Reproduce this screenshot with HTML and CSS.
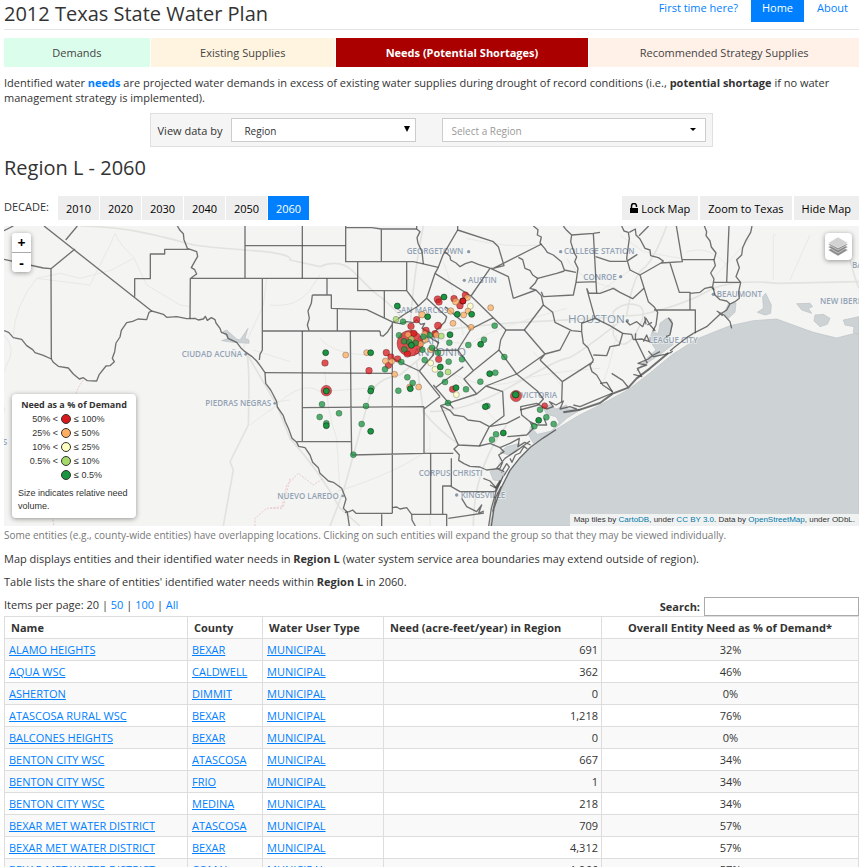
FILE: index.html
```html
<!DOCTYPE html>
<html lang="en">
<head>
<meta charset="utf-8">
<title>2012 Texas State Water Plan</title>
<link rel="stylesheet" href="styles.css">
</head>
<body>
<header class="site-header">
  <h1>2012 Texas State Water Plan</h1>
  <nav class="site-nav">
    <a href="#first">First time here?</a>
    <a href="#home" class="active">Home</a>
    <a href="#about">About</a>
  </nav>
</header>

<nav class="tabs">
  <a href="#demands" class="tab demands">Demands</a>
  <a href="#supplies" class="tab supplies">Existing Supplies</a>
  <a href="#needs" class="tab needs">Needs (Potential Shortages)</a>
  <a href="#strategies" class="tab strategies">Recommended Strategy Supplies</a>
</nav>

<p class="intro">Identified water <a href="#needs"><b>needs</b></a> are projected water demands in excess of existing water supplies during drought of record conditions (i.e., <b>potential shortage</b> if no water management strategy is implemented).</p>

<form class="picker">
  <label for="view-by">View data by</label>
  <span class="field view-by">
    <select id="view-by"><option>Region</option><option>County</option></select>
    <svg class="arrow" width="8" height="8" viewBox="0 0 8 8"><path d="M1 1h6L4 7z"/></svg>
  </span>
  <span class="field region">
    <input type="text" aria-label="Region" placeholder="Select a Region">
    <svg class="arrow" width="8" height="8" viewBox="0 0 8 8"><path d="M1 3h6L4 6z"/></svg>
  </span>
</form>

<h2>Region L - 2060</h2>

<div class="map-bar">
  <span class="bar-label">DECADE:</span>
  <div class="buttons decades">
    <button type="button">2010</button>
    <button type="button">2020</button>
    <button type="button">2030</button>
    <button type="button">2040</button>
    <button type="button">2050</button>
    <button type="button" class="active">2060</button>
  </div>
  <div class="buttons tools">
    <button type="button"><svg width="8" height="11" viewBox="0 0 8 11"><path d="M1.500 6V3a2.500 2.500 0 0 1 5 0v1" fill="none" stroke="#000" stroke-width="1.500"/><path d="M0 5h8v5H0z"/></svg> Lock Map</button>
    <button type="button">Zoom to Texas</button>
    <button type="button">Hide Map</button>
  </div>
</div>

<div class="map">
<svg class="map-canvas" viewBox="12 3 2565 900" preserveAspectRatio="xMidYMid slice">
  <rect class="land" x="-2000" y="-200" width="7000" height="1400"/>
  <g class="road">
    <path d="M240 3Q350 5 440 25T560 55T735 75T870 105L960 125Q1020 100 1060 140L1120 200Q1180 240 1230 310"/>
    <path d="M740 385Q750 420 745 600L690 710L700 735L670 903M740 385L830 540L870 640Q960 740 1020 850L1080 903"/>
    <path d="M990 903L1030 800L1110 510Q1130 460 1200 450L1260 400M1250 410L1270 560Q1320 620 1380 660"/>
    <path d="M1270 3Q1240 150 1230 310L1260 400M1240 330Q1400 300 1600 290T1850 275L1920 270Q2050 240 2120 200T2330 175L2577 170"/>
    <path d="M1290 560Q1400 560 1540 480T1700 400T1860 290M1840 260Q1870 230 1910 240T1910 320T1840 330ZM2000 3Q1960 110 1930 130T1880 270"/>
    <path d="M1420 903Q1420 730 1520 600M2530 30Q2560 150 2577 190"/>
  </g>
  <g class="road minor">
    <path d="M12 330Q50 370 20 420T15 560M40 330Q45 240 110 160L270 180L330 60L345 25Q360 60 400 95L440 180L540 240L570 245"/>
    <path d="M110 160L180 145L240 160L335 135L400 100M800 160L790 240L730 370M760 375L870 410M830 530L870 525M750 600L830 540"/>
    <path d="M810 560Q900 460 960 500L1100 490M975 440Q980 560 1010 640L1020 800M960 340Q1000 390 1120 390M1010 800Q1200 740 1290 670M810 240Q900 250 940 180L960 150"/>
    <path d="M1310 340Q1400 370 1440 340T1700 250M1310 400L1500 600M1330 430Q1440 500 1540 470T1800 430M1400 40Q1520 70 1620 60M1690 490Q1650 430 1600 380M2330 30H2320V165M2370 165L2430 30M1860 30L1930 80L2040 100M2250 40L2130 170M1800 200Q1850 160 1900 130"/>
    <path d="M1290 620V903M1470 850L1500 700M1850 330Q1830 420 1810 470M2060 80Q2130 60 2180 120M1700 100Q1740 170 1850 190M1330 110Q1370 220 1390 330"/>
  </g>
  <path class="border" d="M250 465Q230 490 225 520M155 865L162 903M765 903V880L800 850L850 845L870 760M810 850L845 850L860 780L895 745L940 780L970 760"/>
  <path class="water" d="M1470 903L1480 850L1502 790L1530 735L1560 698L1590 668L1628 640L1670 612L1735 572L1800 540L1885 494L1950 444L2015 390L2090 342L2190 302L2260 287L2330 282L2390 304L2440 322L2510 339L2545 330L2577 322V903Z"/>
  <path class="water" d="M1975 325L1980 295L2000 280L2015 283L2018 300L2005 335L2020 358L1985 385L1940 415L1910 438L1945 395L1968 375L1950 348L1955 322ZM2172 265L2185 237L2208 234L2205 262L2185 280ZM2272 262L2290 250L2288 215L2297 205L2314 240L2312 265L2295 270ZM2390 236L2430 235L2438 245L2425 250L2435 265L2405 255ZM2445 270L2470 268L2490 280L2482 298L2460 305L2442 288ZM2530 285L2577 275V330L2560 322L2562 305L2535 300Z"/>
  <path class="water" d="M1585 628L1592 605L1612 628L1655 618L1678 592L1668 575L1640 568L1628 545L1650 540L1668 552L1700 540L1702 552L1745 552L1700 580L1672 605L1630 635L1600 655ZM1500 682L1520 665L1560 655L1548 680L1526 690ZM1470 740L1490 728L1515 740L1502 768L1480 765ZM665 347L685 340L668 320L680 315L710 342L720 345L744 310L735 340L747 345V355L700 352Z"/>

  <g class="labels">
    <text x="545" y="397">CIUDAD ACUÑA</text><text x="616" y="543">PIEDRAS NEGRAS</text>
    <text x="832" y="822">NUEVO LAREDO</text><text x="-8" y="661">AS</text>
    <text x="1220" y="87">GEORGETOWN</text><text x="1404" y="174">AUSTIN</text>
    <text x="1190" y="265">SAN MARCOS</text><text x="1692" y="88">COLLEGE STATION</text>
    <text x="1750" y="164">CONROE</text><text x="1563" y="519">VICTORIA</text>
    <text x="1256" y="753">CORPUS CHRISTI</text><text x="1382" y="818">KINGSVILLE</text>
    <text x="2150" y="216">BEAUMONT</text><text x="1946" y="353">LEAGUE CITY</text>
    <text x="2460" y="236">NEW IBERIA</text><text x="2556" y="130">BATON</text>
    <text class="big" x="1704" y="295">HOUSTON</text>
    <text class="big" x="1252" y="358">SAN</text><text class="big" x="1240" y="392">ANTONIO</text>
  </g>
  <g class="towns">
    <circle cx="737" cy="388" r="4"/><circle cx="824" cy="535" r="4"/><circle cx="1028" cy="813" r="4"/><circle cx="1406" cy="80" r="5"/>
    <circle cx="1393" cy="166" r="5"/><circle cx="1682" cy="80" r="5"/><circle cx="1862" cy="155" r="5"/><circle cx="1370" cy="810" r="5"/><circle cx="1882" cy="287" r="5"/><circle cx="2140" cy="208" r="5"/>
  </g>

  <g class="county">
    <path d="M12 17L40 3M132 3L455 258M197 45L232 3M225 72L153 131L130 129L12 103M153 131L154 402"/>
    <path d="M12 317L26 322L40 338L65 343L80 362L98 374L105 383L130 391L154 402L160 412L175 424L205 429L220 447L238 462L250 458L262 467L290 468L298 448L318 423L330 422L343 410L337 400L344 380L348 354L360 336L364 316L380 293L398 289L414 282L440 284L447 262L455 258L470 262L490 268L500 277L530 275L560 281L585 280L595 285L610 282L616 274L622 286L634 278L645 284L648 294L660 310L664 322L680 328L684 340L710 352L722 368L735 380L755 394L770 408L782 424L795 443L797 475L812 495L820 510L830 530L832 546L850 572L856 590L866 612L876 640L890 652L896 664L915 668L930 690L938 712L955 728L960 745L985 768L1000 772L1025 790L1038 822L1030 850L1042 862L1048 903"/>
    <path d="M532 3L540 16L550 26L552 44L562 70L590 80L593 94L584 110L574 128L584 134L590 147L572 160M570 281L571 160H1073M568 73H494V87H451V161H404V215M735 3V160M735 62H1037M787 160V375L780 388L778 405M787 318H1140M795 443L1177 445"/>
    <path d="M907 3V160M1037 8L1115 8L1144 12H1250M1037 3V110H1240L1315 127M1144 12V110M1073 110V197H1220M1220 110V197L1255 243M1153 197V280M981 160V212M937 210H994V250L1100 254L1180 292M937 210L934 235L924 258L928 280L922 300L927 316M1012 250V317"/>
    <path d="M1140 318L1142 332L1150 333L1162 322L1178 296M907 318V650M1051 318L1053 550L1055 690M907 548L1272 545M890 650H1053M1055 690L1272 685L1360 685M1177 292V865M1272 545V685M1272 552L1320 515M1177 400L1258 438L1320 515M1258 438L1300 390L1305 365"/>
    <path d="M1035 862L1048 860L1058 855L1068 865H1177M1177 848L1190 846L1200 852L1220 848L1235 868H1340V903M1292 685V868M1328 868V783H1353M1145 868V903M1235 868L1236 885L1246 903"/>
    <path d="M1250 3L1250 12L1260 20L1251 38L1254 55L1266 80L1270 117M1373 15L1335 80L1328 92L1315 127L1305 145L1280 220L1255 243L1210 270L1180 292M1305 145L1413 213M1280 220L1340 275L1335 290L1300 325"/>
    <path d="M1180 292L1200 296L1220 290L1240 293L1250 284L1262 298L1274 295L1266 310L1290 322L1285 332L1300 345L1316 352L1310 368L1318 390"/>
    <path d="M1373 3V15L1480 50L1495 65L1512 122L1480 130M1335 80L1350 94L1352 105L1368 114L1380 125L1396 116L1415 110L1435 118L1472 130L1480 130M1472 130L1525 155L1540 220M1470 130L1413 213M1413 213L1480 278L1413 312L1335 245M1480 278L1518 315H1573L1630 240L1624 212L1608 195L1540 220M1480 130L1625 57M1555 97L1568 104L1575 130L1590 136L1598 150L1613 160L1605 175L1590 190L1608 195"/>
    <path d="M1600 3L1614 14L1612 30L1624 36L1620 54L1634 70L1642 82L1660 90L1684 110L1693 135L1728 142M1613 160L1670 145L1693 138M1624 200L1630 215L1720 210L1728 172M1690 3L1700 16L1715 30L1712 50L1722 82L1730 96L1724 110L1734 130L1728 172L1788 170M1715 30L1780 25L1800 22M1780 25L1790 205M1787 95L1830 109H1880"/>
    <path d="M1630 240L1658 262L1665 292L1715 317L1745 320M1573 315L1635 387L1550 447M1518 315L1502 345L1497 375L1550 447L1612 498L1630 522L1614 540L1560 555M1620 405L1635 387L1680 375L1710 318M1620 405L1687 470L1685 530M1687 470L1780 410M1745 320L1750 355L1764 368L1780 405L1770 422L1776 440L1790 450L1808 480L1838 500M1760 190L1785 280L1745 295V320M1760 190L1766 204L1800 205L1840 190L1860 202L1898 221L1932 190M1785 280L1830 302L1868 325L1858 360L1830 365L1820 392L1780 390"/>
    <path d="M1413 312L1373 375L1420 437L1497 375M1373 375L1300 377M1420 437L1392 462L1430 507L1458 483L1550 447M1308 487L1390 425M1300 480L1360 550M1430 507L1322 542L1375 660L1438 663L1468 605L1512 572L1508 500L1458 483M1322 542L1350 556L1362 570L1392 575L1404 585L1440 590L1468 605L1520 595L1560 575"/>
    <path class="shore" d="M1375 660L1362 672L1378 690L1376 706L1392 716L1410 724L1440 726L1460 735L1500 730L1508 712L1496 690L1512 680L1500 668L1530 655L1558 640L1554 665L1574 652L1592 660M1522 635L1580 630L1600 610L1590 590L1565 570L1562 545L1610 535L1640 552L1660 545L1648 530L1668 540L1690 528L1680 552L1710 545L1730 552M1512 740L1490 730L1515 700L1560 670L1590 648M1354 700V785L1380 800H1485L1500 770M1385 820L1400 845L1430 860L1445 840L1436 864L1452 858M1452 864L1400 872L1345 880M1450 760L1470 768L1490 790L1470 780M1590 590L1610 600L1640 600L1632 580M1438 663L1470 655L1500 668M1530 700L1536 712L1546 690L1560 684L1572 664L1582 672M1504 742L1520 716L1528 726L1512 752"/>
    <path class="shore" d="M1466 903L1474 850L1488 800L1510 752M1474 903L1482 850L1502 792L1530 736L1560 698L1592 666L1628 640L1668 614M1478 860L1488 815L1504 784"/>
    <path class="shore thick" d="M1486 790L1502 766M1690 562L1740 554L1800 534L1838 506L1885 488L1910 460L1950 430L2005 384"/>
    <path class="shore" d="M1800 475L1820 472L1838 502M1835 445L1855 458L1868 466L1884 486M1900 448L1925 455L1912 430L1940 420L1914 415L1945 402L1960 390L1980 380M1907 325L1906 342L1942 415M1945 378L1960 395L1995 388L2012 383L2018 378M1720 540L1740 545L1790 524L1838 504M2010 378L2025 365L2060 338L2080 325"/>
    <path d="M1865 3L1872 18L1885 22L1888 40L1880 100L1890 135L1920 150M1888 22L1906 12L1908 30L1920 42L1935 70L1950 75L1952 92L1975 98L1990 108L1983 114M1917 32L1946 3M2029 3L2047 110L1983 114L1920 150M1920 150L1945 230L1962 245L1973 262L1968 300L1958 320M1912 88L1880 109M2010 114L2038 202H2070V255M1962 255H2086V325M2047 104H2143M2070 205L2100 202L2115 190L2134 186L2143 195"/>
    <path d="M2113 3L2120 20L2118 32L2130 48L2134 66L2148 84L2142 105L2146 122L2132 144L2142 162L2138 184L2145 210L2160 224L2180 228L2190 237M2187 3L2180 172M2138 172H2220M2256 3L2252 22L2238 46L2228 68L2225 90L2210 104L2218 128L2208 155L2222 172L2216 200L2218 220L2205 230L2190 237L2180 255L2160 268L2120 305L2080 325M2150 258L2172 270L2190 290L2195 310M2155 262L2168 272M1868 325L1895 328L1900 344L1925 342L1948 350L1940 330L1930 350M1878 288L1890 300L1910 290L1928 305L1938 280L1950 300L1966 318M1934 275L1938 298M1942 300L1956 292M2005 278L2017 295L2010 330L1998 335"/>
  </g>

  <g class="dot dim">
    <g class="red"><circle cx="1230" cy="355" r="39"/><circle cx="979" cy="497" r="16"/><circle cx="1548" cy="513" r="17"/><circle cx="975" cy="414" r="10"/><circle cx="1107" cy="437" r="10"/><circle cx="1159" cy="383" r="10"/><circle cx="1173" cy="396" r="10"/><circle cx="1165" cy="421" r="10"/><circle cx="1193" cy="402" r="10"/><circle cx="1233" cy="304" r="10"/><circle cx="1250" cy="284" r="10"/><circle cx="1241" cy="325" r="10"/><circle cx="1222" cy="387" r="10"/><circle cx="1278" cy="316" r="10"/><circle cx="1314" cy="302" r="11"/><circle cx="1313" cy="223" r="11"/><circle cx="1317" cy="231" r="10"/><circle cx="1362" cy="221" r="10"/><circle cx="1396" cy="210" r="10"/><circle cx="1388" cy="228" r="10"/><circle cx="1380" cy="242" r="10"/><circle cx="1316" cy="403" r="10"/><circle cx="1358" cy="493" r="10"/><circle cx="1634" cy="542" r="9"/><circle cx="1305" cy="326" r="10"/></g>
    <g class="orange"><circle cx="1037" cy="390" r="9"/><circle cx="1100" cy="383" r="9"/><circle cx="1156" cy="408" r="9"/><circle cx="1175" cy="409" r="9"/><circle cx="1184" cy="448" r="9"/><circle cx="1256" cy="486" r="9"/><circle cx="1229" cy="486" r="9"/><circle cx="1266" cy="269" r="10"/><circle cx="1224" cy="329" r="9"/><circle cx="1274" cy="327" r="9"/><circle cx="1276" cy="345" r="9"/><circle cx="1262" cy="357" r="9"/><circle cx="1292" cy="374" r="9"/><circle cx="1309" cy="330" r="9"/><circle cx="1352" cy="258" r="10"/><circle cx="1367" cy="230" r="10"/><circle cx="1402" cy="218" r="9"/><circle cx="1404" cy="258" r="9"/><circle cx="1391" cy="270" r="9"/><circle cx="1359" cy="295" r="9"/><circle cx="1413" cy="307" r="9"/><circle cx="1472" cy="248" r="9"/></g>
    <g class="yellow"><circle cx="1411" cy="243" r="9"/><circle cx="1292" cy="414" r="9"/><circle cx="1305" cy="433" r="9"/><circle cx="1369" cy="509" r="9"/></g>
    <g class="lime"><circle cx="1188" cy="283" r="9"/><circle cx="1324" cy="333" r="9"/><circle cx="1344" cy="441" r="9"/><circle cx="1234" cy="342" r="9"/></g>
    <g class="green"><circle cx="1209" cy="290" r="9"/><circle cx="1197" cy="331" r="9"/><circle cx="1212" cy="349" r="9"/><circle cx="1213" cy="373" r="9"/><circle cx="1228" cy="352" r="9"/><circle cx="1247" cy="354" r="9"/><circle cx="1270" cy="335" r="9"/><circle cx="1289" cy="331" r="9"/><circle cx="1267" cy="374" r="9"/><circle cx="1296" cy="368" r="9"/><circle cx="1314" cy="383" r="9"/><circle cx="1274" cy="405" r="9"/><circle cx="1204" cy="411" r="9"/><circle cx="1155" cy="433" r="9"/><circle cx="1222" cy="457" r="9"/><circle cx="1238" cy="474" r="9"/><circle cx="1195" cy="497" r="9"/><circle cx="1348" cy="353" r="9"/><circle cx="1346" cy="410" r="9"/><circle cx="1321" cy="448" r="9"/><circle cx="1335" cy="471" r="9"/><circle cx="1344" cy="534" r="9"/><circle cx="1386" cy="403" r="9"/><circle cx="1405" cy="360" r="9"/><circle cx="1452" cy="344" r="9"/><circle cx="1484" cy="302" r="9"/><circle cx="1513" cy="396" r="9"/><circle cx="1486" cy="443" r="9"/><circle cx="1441" cy="470" r="9"/><circle cx="1398" cy="493" r="9"/><circle cx="1462" cy="543" r="9"/><circle cx="1114" cy="490" r="9"/><circle cx="1098" cy="543" r="9"/><circle cx="1085" cy="597" r="9"/><circle cx="1060" cy="689" r="9"/><circle cx="966" cy="538" r="9"/><circle cx="959" cy="576" r="9"/><circle cx="1017" cy="565" r="9"/><circle cx="979" cy="595" r="9"/><circle cx="1488" cy="628" r="9"/><circle cx="1476" cy="644" r="9"/><circle cx="1603" cy="604" r="9"/><circle cx="1620" cy="554" r="9"/><circle cx="1639" cy="577" r="9"/><circle cx="1661" cy="597" r="9"/></g>
  </g>
  <g class="dot solid">
    <g class="green"><circle cx="1192" cy="243" r="9"/><circle cx="1283" cy="275" r="9"/><circle cx="1332" cy="216" r="9"/><circle cx="1372" cy="268" r="9"/><circle cx="1415" cy="268" r="9"/><circle cx="1350" cy="329" r="9"/><circle cx="1442" cy="358" r="9"/><circle cx="1469" cy="446" r="9"/><circle cx="1321" cy="426" r="9"/><circle cx="1368" cy="488" r="9"/><circle cx="1456" cy="545" r="9"/><circle cx="977" cy="383" r="9"/><circle cx="1112" cy="383" r="9"/><circle cx="979" cy="498" r="9"/><circle cx="1112" cy="498" r="9"/><circle cx="1231" cy="491" r="9"/><circle cx="1112" cy="619" r="9"/><circle cx="979" cy="602" r="9"/><circle cx="1234" cy="361" r="9"/><circle cx="1547" cy="509" r="10"/><circle cx="1616" cy="586" r="9"/><circle cx="1510" cy="624" r="9"/></g>
    <g class="red"><circle cx="1389" cy="228" r="9"/></g>
  </g>
</svg>

  <div class="zoom-control">
    <button type="button" aria-label="Zoom in">+</button>
    <button type="button" aria-label="Zoom out">-</button>
  </div>
  <button type="button" class="layers" aria-label="Layers">
    <svg width="20" height="20" viewBox="0 0 20 20"><g stroke="#fff" stroke-width=".5"><path fill="#8a8a8a" d="M0 13l10-5 10 5-10 6z"/><path fill="#8a8a8a" d="M0 10l10-5 10 5-10 6z"/><path fill="#8a8a8a" d="M0 7.500L10 3l10 4.500L10 13z"/><path fill="#d2d2d2" d="M0 6L10 0l10 6-10 5z"/></g></svg>
  </button>
  <div class="legend">
    <h3>Need as a % of Demand</h3>
    <ul>
      <li><span class="low">50% &lt;</span><i class="red"></i><span>≤ 100%</span></li>
      <li><span class="low">25% &lt;</span><i class="orange"></i><span>≤ 50%</span></li>
      <li><span class="low">10% &lt;</span><i class="yellow"></i><span>≤ 25%</span></li>
      <li><span class="low">0.5% &lt;</span><i class="lime"></i><span>≤ 10%</span></li>
      <li><span class="low"></span><i class="green"></i><span>≤ 0.5%</span></li>
    </ul>
    <p>Size indicates relative need volume.</p>
  </div>
  <div class="attribution">Map tiles by <a href="#carto">CartoDB</a>, under <a href="#cc">CC BY 3.0</a>. Data by <a href="#osm">OpenStreetMap</a>, under ODbL.</div>
</div>

<p class="map-note">Some entities (e.g., county-wide entities) have overlapping locations. Clicking on such entities will expand the group so that they may be viewed individually.</p>
<p class="about">Map displays entities and their identified water needs in <b>Region L</b> (water system service area boundaries may extend outside of region).</p>
<p class="about">Table lists the share of entities' identified water needs within <b>Region L</b> in 2060.</p>

<div class="table-bar">
  <div>Items per page: 20 | <a href="#50">50</a> | <a href="#100">100</a> | <a href="#all">All</a></div>
  <div class="search"><label for="search">Search:</label><input id="search" type="text"></div>
</div>

<table>
  <colgroup><col class="c-name"><col class="c-county"><col class="c-type"><col class="c-need"><col class="c-pct"></colgroup>
  <thead><tr><th>Name</th><th>County</th><th>Water User Type</th><th>Need (acre-feet/year) in Region</th><th class="pct">Overall Entity Need as % of Demand*</th></tr></thead>
  <tbody>
    <tr><td><a href="#e">ALAMO HEIGHTS</a></td><td><a href="#c">BEXAR</a></td><td><a href="#t">MUNICIPAL</a></td><td class="num">691</td><td class="pct">32%</td></tr>
    <tr><td><a href="#e">AQUA WSC</a></td><td><a href="#c">CALDWELL</a></td><td><a href="#t">MUNICIPAL</a></td><td class="num">362</td><td class="pct">46%</td></tr>
    <tr><td><a href="#e">ASHERTON</a></td><td><a href="#c">DIMMIT</a></td><td><a href="#t">MUNICIPAL</a></td><td class="num">0</td><td class="pct">0%</td></tr>
    <tr><td><a href="#e">ATASCOSA RURAL WSC</a></td><td><a href="#c">BEXAR</a></td><td><a href="#t">MUNICIPAL</a></td><td class="num">1,218</td><td class="pct">76%</td></tr>
    <tr><td><a href="#e">BALCONES HEIGHTS</a></td><td><a href="#c">BEXAR</a></td><td><a href="#t">MUNICIPAL</a></td><td class="num">0</td><td class="pct">0%</td></tr>
    <tr><td><a href="#e">BENTON CITY WSC</a></td><td><a href="#c">ATASCOSA</a></td><td><a href="#t">MUNICIPAL</a></td><td class="num">667</td><td class="pct">34%</td></tr>
    <tr><td><a href="#e">BENTON CITY WSC</a></td><td><a href="#c">FRIO</a></td><td><a href="#t">MUNICIPAL</a></td><td class="num">1</td><td class="pct">34%</td></tr>
    <tr><td><a href="#e">BENTON CITY WSC</a></td><td><a href="#c">MEDINA</a></td><td><a href="#t">MUNICIPAL</a></td><td class="num">218</td><td class="pct">34%</td></tr>
    <tr><td><a href="#e">BEXAR MET WATER DISTRICT</a></td><td><a href="#c">ATASCOSA</a></td><td><a href="#t">MUNICIPAL</a></td><td class="num">709</td><td class="pct">57%</td></tr>
    <tr><td><a href="#e">BEXAR MET WATER DISTRICT</a></td><td><a href="#c">BEXAR</a></td><td><a href="#t">MUNICIPAL</a></td><td class="num">4,312</td><td class="pct">57%</td></tr>
    <tr><td><a href="#e">BEXAR MET WATER DISTRICT</a></td><td><a href="#c">COMAL</a></td><td><a href="#t">MUNICIPAL</a></td><td class="num">1,966</td><td class="pct">57%</td></tr>
  </tbody>
</table>
</body>
</html>
```
FILE: styles.css
```css
* { box-sizing: border-box; }
html { overflow: hidden; }
body {
  margin: 0;
  padding: 0 7px 0 4px;
  font: 11px/15px "Open Sans", sans-serif;
  color: #333;
  background: #fff;
}
a { color: #007fff; text-decoration: none; }
h1, h2, h3, p, ul { margin: 0; padding: 0; }
h1, h2 { font-size: 20px; line-height: 28px; font-weight: 400; }
button, input, select { font: inherit; color: inherit; border-radius: 0; margin: 0; }

.site-header {
  display: flex;
  justify-content: space-between;
  align-items: flex-start;
  height: 30px;
  border-bottom: 1px solid #e5e5e5;
}
.site-nav { display: flex; gap: 2px; }
.site-nav a { padding: 0 11px 6px; line-height: 16px; }
.site-nav .active { background: #007fff; color: #fff; }

.tabs {
  display: grid;
  grid-template-columns: 146fr 184fr 253fr 270fr;
  gap: 1px;
  margin-top: 8px;
}
.tab { color: #444; text-align: center; line-height: 29px; }
.demands { background: #dbfdeb; }
.supplies { background: #fff4df; }
.needs { background: #a00; color: #fff; font-weight: 700; }
.strategies { background: #fff0e8; }

.intro { margin-top: 8px; }

.picker {
  display: flex;
  align-items: center;
  width: fit-content;
  margin: 8px auto 0;
  padding: 4px 6px 4px 7px;
  border: 1px solid #e0e0e0;
  background: #f5f5f5;
}
.field { position: relative; display: block; }
.view-by { width: 185px; margin: 0 26px 0 9px; }
.region { width: 264px; }
.field select, .field input {
  display: block;
  appearance: none;
  width: 100%;
  height: 24px;
  border: 1px solid #ccc;
  background: #fff;
  font-size: 10px;
  padding: 2px 8px 0;
}
.field select { padding-left: 12px; }
.field input::placeholder { color: #999; opacity: 1; }
.arrow { position: absolute; right: 5px; top: 7px; pointer-events: none; }
.region .arrow { right: 9px; }

h2 { margin-top: 7px; }

.map-bar { display: flex; align-items: flex-start; margin-top: 14px; }
.bar-label { line-height: 22px; width: 54px; }
.buttons { display: flex; gap: 1px; }
.buttons button {
  border: 0;
  padding: 1px 8px 0;
  height: 24px;
  background: #eee;
  color: #000;
}
.decades button { width: 41px; }
.buttons .active { background: #007fff; color: #fff; }
.tools { margin-left: auto; gap: 2px; }
.tools svg { vertical-align: -1px; }

.map { position: relative; height: 300px; margin-top: 6px; overflow: hidden; }
.map-canvas { display: block; width: 100%; height: 100%; }
.land { fill: #f4f4f3; }
.water { fill: #cdd2d4; stroke: #bcc1c4; stroke-width: 2; }
.road { fill: none; stroke: #e2e3df; stroke-width: 5; }
.minor { stroke: #e8e8e6; stroke-width: 3; }
.border { fill: none; stroke: #ecc8cb; stroke-width: 3; stroke-dasharray: 6 4; }
.county { fill: none; stroke: #444; stroke-opacity: .75; stroke-width: 4; stroke-linejoin: round; }
.thick { stroke-width: 6; }
.labels { font-size: 24px; font-weight: 600; fill: #93a3b3; stroke: #f4f4f3; stroke-opacity: .7; stroke-width: 5; paint-order: stroke; }
.labels .big { font-size: 35px; font-weight: 400; fill: #8496a8; }
.towns { fill: #8799aa; }
.dot { stroke: #000; stroke-width: 2; }
.dim { fill-opacity: .75; stroke-opacity: .35; }
.solid { stroke-opacity: .65; }
.red { fill: #d7191c; background: #d7191c; }
.orange { fill: #fdae61; background: #fdae61; }
.yellow { fill: #ffffbf; background: #ffffbf; }
.lime { fill: #a6d96a; background: #a6d96a; }
.green { fill: #1a9641; background: #1a9641; }

.zoom-control, .layers, .legend {
  position: absolute;
  background: #fff;
  border-radius: 4px;
  box-shadow: 0 1px 5px rgba(0, 0, 0, .4);
}
.zoom-control { left: 8px; top: 7px; width: 19px; overflow: hidden; }
.zoom-control button {
  display: block;
  width: 100%;
  height: 19px;
  padding: 0;
  border: 0;
  background: #fff;
  color: #000;
  font-size: 14px;
  line-height: 18px;
  font-weight: 700;
}
.zoom-control button + button { height: 20px; border-top: 1px solid #aaa; }
.layers { right: 7px; top: 7px; width: 27px; height: 27px; border: 0; padding: 4px 3px; }
.layers svg { display: block; }
.legend { left: 8px; bottom: 8px; width: 124px; padding: 4px 6px 5px; }
.legend h3 { font-size: 9px; line-height: 14px; text-align: center; }
.legend ul { list-style: none; font: 9px/14px "Liberation Sans", sans-serif; }
.legend li { display: flex; align-items: center; gap: 3px; }
.legend .low { width: 40px; text-align: right; }
.legend i { width: 10px; height: 10px; border: 1px solid #333; border-radius: 50%; }
.legend p { font: 9px/13px "Liberation Sans", sans-serif; margin-top: 5px; }
.attribution {
  position: absolute;
  right: 0;
  bottom: 0;
  padding: 0 4px;
  background: rgba(255, 255, 255, .7);
  font: 8px/12px "Liberation Sans", sans-serif;
}
.attribution a { color: #0078a8; }

.map-note { font-size: 10px; line-height: 15px; color: #777; margin-top: 2px; }
.about { margin-top: 8px; }

.table-bar { display: flex; justify-content: space-between; margin-top: 8px; line-height: 16px; }
.search { display: flex; gap: 4px; font-weight: 700; line-height: 19px; }
.search input { width: 155px; height: 19px; border: 1px solid #aaa; background: #fff; padding: 0 4px; }

table { width: 100%; table-layout: fixed; border-collapse: collapse; }
.c-name { width: 183px; }
.c-county { width: 75px; }
.c-type { width: 121px; }
.c-need { width: 218px; }
th, td { height: 22px; padding: 0 3px 0 4px; border: 1px solid #ddd; text-align: left; line-height: 16px; }
th { padding: 0 6px; }
tbody tr:nth-child(odd) { background: #f9f9f9; }
td a { text-decoration: underline; }
td.num { text-align: right; }
th.pct, td.pct { text-align: center; }
```
